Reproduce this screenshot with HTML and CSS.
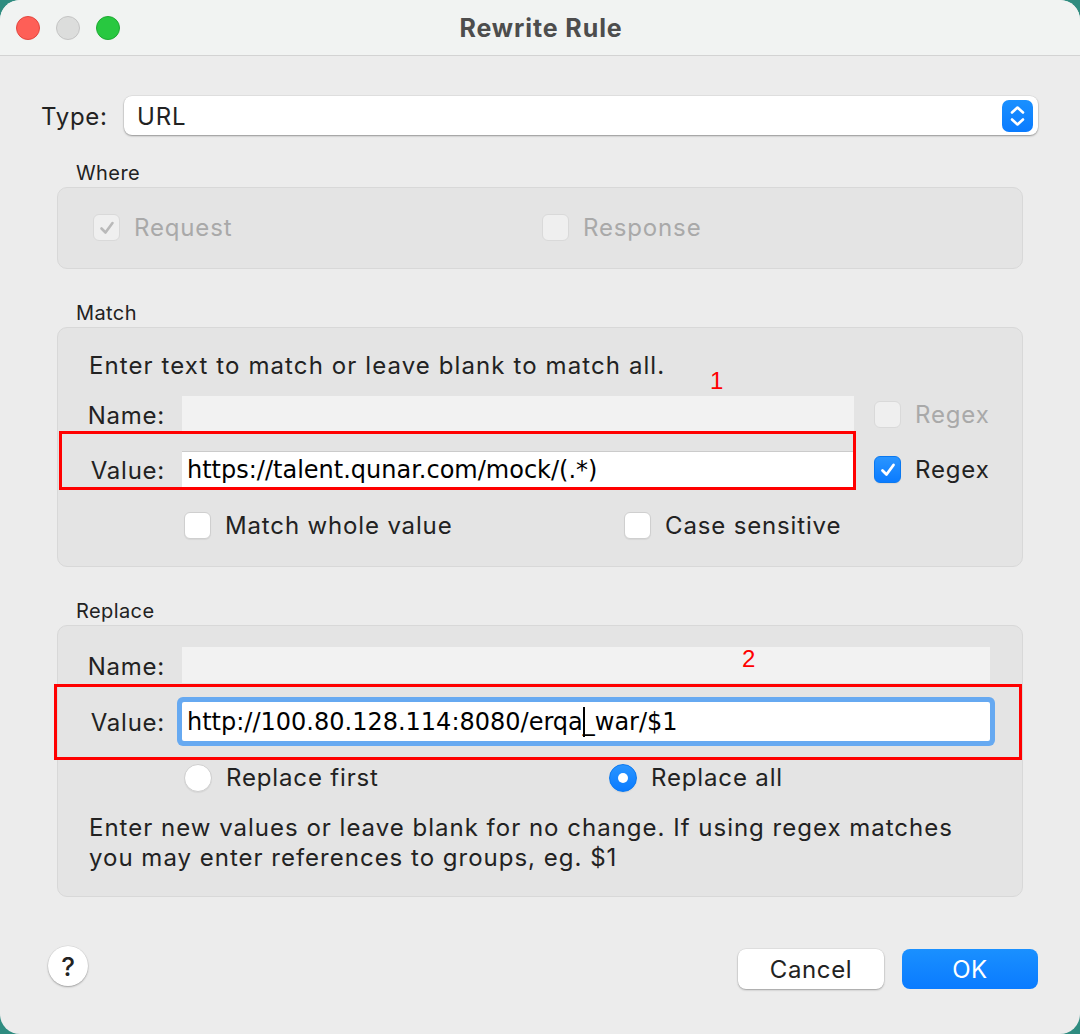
FILE: index.html
```html
<!DOCTYPE html>
<html lang="en">
<head>
<meta charset="utf-8">
<title>Rewrite Rule</title>
<link rel="stylesheet" href="styles.css">
</head>
<body>
<div class="window">
  <header class="titlebar">
    <div class="lights">
      <span class="light light-red"></span>
      <span class="light light-gray"></span>
      <span class="light light-green"></span>
    </div>
    <div class="title">Rewrite Rule</div>
    <div class="spacer"></div>
  </header>

  <main class="content">
    <div class="type-row">
      <span class="type-label">Type:</span>
      <div class="popup">
        <span class="popup-value">URL</span>
        <span class="stepper">
          <svg width="31" height="32" viewBox="0 0 31 32"><path d="M10 12.5 L15.5 7.5 L21 12.5 M10 19.5 L15.5 24.5 L21 19.5" fill="none" stroke="#fff" stroke-width="2.6" stroke-linecap="round" stroke-linejoin="round"/></svg>
        </span>
      </div>
    </div>

    <section class="group group-where">
      <div class="group-label">Where</div>
      <div class="group-box where-box">
        <label class="check is-disabled">
          <span class="box box-disabled">
            <svg width="18" height="18" viewBox="0 0 18 18"><path d="M3.5 9.5 L7.5 13.5 L14.5 4" fill="none" stroke="#b9b9b9" stroke-width="2.6" stroke-linecap="round" stroke-linejoin="round"/></svg>
          </span>
          <span class="check-text">Request</span>
        </label>
        <label class="check is-disabled">
          <span class="box box-disabled"></span>
          <span class="check-text">Response</span>
        </label>
      </div>
    </section>

    <section class="group group-match">
      <div class="group-label">Match</div>
      <div class="group-box match-box">
        <p class="intro">Enter text to match or leave blank to match all.</p>
        <div class="field-row">
          <span class="row-label">Name:</span>
          <div class="field field-match field-disabled"></div>
          <label class="check is-disabled side-check">
            <span class="box box-disabled"></span>
            <span class="check-text">Regex</span>
          </label>
        </div>
        <div class="field-row row-value">
          <span class="row-label">Value:</span>
          <div class="field field-match field-white">https://talent.qunar.com/mock/(.*)</div>
          <label class="check side-check">
            <span class="box box-checked">
              <svg width="20" height="20" viewBox="0 0 20 20"><path d="M4.5 10.5 L8.5 14.5 L15.5 5" fill="none" stroke="#fff" stroke-width="2.8" stroke-linecap="round" stroke-linejoin="round"/></svg>
            </span>
            <span class="check-text">Regex</span>
          </label>
        </div>
        <div class="option-row option-checks">
          <label class="check">
            <span class="box"></span>
            <span class="check-text">Match whole value</span>
          </label>
          <label class="check">
            <span class="box"></span>
            <span class="check-text">Case sensitive</span>
          </label>
        </div>
        <div class="annot-box annot-match"></div>
        <div class="annot-num annot-num-1">1</div>
      </div>
    </section>

    <section class="group group-replace">
      <div class="group-label">Replace</div>
      <div class="group-box replace-box">
        <div class="field-row">
          <span class="row-label">Name:</span>
          <div class="field field-wide field-disabled"></div>
        </div>
        <div class="field-row row-focus">
          <span class="row-label">Value:</span>
          <div class="field field-wide field-white field-focus">http://100.80.128.114:8080/erqa<span class="caret"></span>_war/$1</div>
        </div>
        <div class="option-row option-radios">
          <label class="check">
            <span class="radio"></span>
            <span class="check-text">Replace first</span>
          </label>
          <label class="check">
            <span class="radio radio-on"><span class="dot"></span></span>
            <span class="check-text">Replace all</span>
          </label>
        </div>
        <p class="note">Enter new values or leave blank for no change. If using regex matches<br>you may enter references to groups, eg. $1</p>
        <div class="annot-box annot-replace"></div>
        <div class="annot-num annot-num-2">2</div>
      </div>
    </section>
  </main>

  <footer class="footer">
    <button class="help" type="button">?</button>
    <div class="buttons">
      <button class="btn btn-cancel" type="button">Cancel</button>
      <button class="btn btn-ok" type="button">OK</button>
    </div>
  </footer>
</div>
</body>
</html>
```

FILE: styles.css
```css
* { box-sizing: border-box; }

html, body {
  margin: 0;
  padding: 0;
}

body {
  width: 1080px;
  height: 1034px;
  background: #2f8c80;
  font-family: Inter, "Noto Sans", "Liberation Sans", sans-serif;
  color: #222;
  overflow: hidden;
}

.window {
  width: 1080px;
  height: 1034px;
  background: #ececec;
  border-radius: 20px;
  overflow: hidden;
  display: flex;
  flex-direction: column;
}

/* Title bar */
.titlebar {
  height: 56px;
  background: #f1f3f2;
  border-bottom: 1px solid #d3d3d3;
  display: grid;
  grid-template-columns: 1fr auto 1fr;
  align-items: center;
  flex: none;
}

.lights {
  display: flex;
  gap: 16px;
  padding-left: 16px;
}

.light {
  width: 24px;
  height: 24px;
  border-radius: 50%;
  display: block;
}
.light-red { background: #fe5f57; border: 1px solid #e2463f; }
.light-gray { background: #dcdddc; border: 1px solid #c4c4c4; }
.light-green { background: #28c840; border: 1px solid #1ea932; }

.title {
  font-size: 25px;
  font-weight: 700;
  color: #4d4d4d;
  letter-spacing: 0.9px;
  padding-left: 2px;
}

/* Content */
.content {
  padding: 40px 42px 0 41px;
  flex: none;
}

.type-row {
  display: flex;
  align-items: center;
  height: 39px;
}

.type-label {
  width: 83px;
  font-size: 24px;
  letter-spacing: 0.7px;
  color: #222;
  padding-top: 2px;
}

.popup {
  flex: 1;
  height: 39px;
  background: #fff;
  border-radius: 8px;
  box-shadow: 0 1px 2px rgba(0,0,0,0.35), 0 0 0 0.5px rgba(0,0,0,0.08);
  display: flex;
  align-items: center;
  justify-content: space-between;
  padding: 0 5px 0 13px;
}

.popup-value {
  font-size: 24px;
  letter-spacing: 0.9px;
  color: #222;
  padding-top: 2px;
}

.stepper {
  width: 31px;
  height: 32px;
  border-radius: 7px;
  background: linear-gradient(#1a90ff, #0a7bff);
  display: block;
}
.stepper svg { display: block; }

/* Groups */
.group {
  margin: 0 15px 0 16px;
}

.group-where { margin-top: 25px; }
.group-match { margin-top: 31px; }
.group-replace { margin-top: 31px; }

.group-label {
  font-size: 20px;
  line-height: 24px;
  letter-spacing: 0.4px;
  padding-left: 19px;
  padding-top: 1px;
  margin-bottom: 2px;
  color: #222;
}

.group-box {
  position: relative;
  background: #e4e4e4;
  border: 1px solid #d8d8d8;
  border-radius: 10px;
}

.where-box {
  height: 82px;
  display: grid;
  grid-template-columns: 449px 1fr;
  align-items: center;
  padding-left: 35px;
  padding-bottom: 1px;
}

/* checkboxes */
.check {
  display: flex;
  align-items: center;
  font-size: 24px;
  letter-spacing: 0.85px;
  color: #222;
  white-space: nowrap;
}

.check-text { line-height: 28px; padding-top: 1px; }

.is-disabled .check-text { color: #a9a9a9; }

.box {
  width: 27px;
  height: 27px;
  border-radius: 6px;
  background: #fff;
  border: 1px solid #cfcfcf;
  box-shadow: 0 1px 1px rgba(0,0,0,0.06);
  margin-right: 14px;
  display: flex;
  align-items: center;
  justify-content: center;
  flex: none;
}

.box-disabled {
  background: #efefef;
  border-color: #d9d9d9;
  box-shadow: none;
}

.box-checked {
  background: linear-gradient(#2a95ff, #0a7bff);
  border-color: #0a78f0;
}

.box svg { display: block; }

.radio {
  width: 28px;
  height: 28px;
  border-radius: 50%;
  background: #fff;
  border: 1px solid #cfcfcf;
  box-shadow: 0 1px 1px rgba(0,0,0,0.06);
  margin-right: 14px;
  flex: none;
  display: flex;
  align-items: center;
  justify-content: center;
}

.radio-on {
  background: linear-gradient(#2a95ff, #0a7bff);
  border-color: #0a78f0;
}

.dot {
  width: 10px;
  height: 10px;
  border-radius: 50%;
  background: #fff;
}

/* Match box */
.match-box {
  height: 240px;
  padding: 23px 0 0 0;
}

.intro {
  margin: 0 0 15px 31px;
  font-size: 24px;
  line-height: 30px;
  letter-spacing: 1.1px;
}

.field-row {
  display: flex;
  align-items: center;
}

.row-label {
  width: 107px;
  text-align: right;
  margin-right: 17px;
  font-size: 24px;
  letter-spacing: 0.75px;
  color: #222;
  padding-top: 2px;
}

.field {
  height: 36px;
  font-family: "DejaVu Sans", Verdana, sans-serif;
  font-size: 24px;
  color: #000;
  display: flex;
  align-items: center;
  padding-left: 5px;
  white-space: nowrap;
}

.field-match { width: 672px; flex: none; }

.field-disabled { background: #f2f2f2; }

.field-white {
  background: #fff;
  border-top: 1px solid #cbcbcb;
  height: 37px;
}

.side-check { margin-left: 20px; }

.row-value { margin-top: 19px; }

.option-row {
  display: grid;
  align-items: center;
  margin-top: 23px;
  padding-left: 126px;
}

.option-checks { grid-template-columns: 440px 1fr; }
.option-radios { grid-template-columns: 425px 1fr; }

/* Replace box */
.replace-box {
  height: 272px;
  padding: 21px 32px 0 0;
}

.field-wide { flex: 1; }

.row-focus { margin-top: 19px; }

.field-focus {
  height: 39px;
  border-top: none;
  border-radius: 2px;
  box-shadow: 0 0 0 5px #66a9f1;
  padding-left: 5px;
}

.caret {
  display: inline-block;
  width: 2px;
  height: 30px;
  background: #000;
  margin-right: -2px;
  vertical-align: middle;
}

.option-radios { margin-top: 22px; }

.note {
  margin: 21px 0 0 31px;
  font-size: 24px;
  line-height: 30px;
  letter-spacing: 1px;
}

/* Annotations */
.annot-box {
  position: absolute;
  border: 3px solid #ff0000;
  pointer-events: none;
}

.annot-match {
  left: 1px;
  top: 103px;
  width: 797px;
  height: 59px;
}

.annot-replace {
  left: -4px;
  top: 58px;
  width: 968px;
  height: 76px;
}

.annot-num {
  position: absolute;
  color: #ff0000;
  font-family: "Liberation Sans", Arial, sans-serif;
  font-size: 24px;
  line-height: 24px;
}

.annot-num-1 { left: 652px; top: 41px; }
.annot-num-2 { left: 684px; top: 21px; }

/* Footer */
.footer {
  margin-top: 52px;
  display: flex;
  align-items: center;
  justify-content: space-between;
  padding: 0 42px 0 48px;
}

.help {
  width: 40px;
  height: 40px;
  border-radius: 50%;
  background: #fff;
  border: none;
  box-shadow: 0 1px 2px rgba(0,0,0,0.3), 0 0 0 0.5px rgba(0,0,0,0.08);
  font-family: Inter, "Liberation Sans", sans-serif;
  font-size: 26px;
  font-weight: 500;
  color: #222;
  padding: 0;
  margin-top: -6px;
  display: flex;
  align-items: center;
  justify-content: center;
}

.buttons {
  display: flex;
  gap: 18px;
}

.btn {
  height: 40px;
  border-radius: 8px;
  border: none;
  font-family: Inter, "Liberation Sans", sans-serif;
  font-size: 24px;
  letter-spacing: 0.6px;
  padding: 0;
}

.btn-cancel {
  width: 146px;
  background: #fff;
  color: #222;
  box-shadow: 0 1px 2px rgba(0,0,0,0.3), 0 0 0 0.5px rgba(0,0,0,0.08);
}

.btn-ok {
  width: 136px;
  background: linear-gradient(#1a90ff, #0a7bff);
  color: #fff;
}
```
